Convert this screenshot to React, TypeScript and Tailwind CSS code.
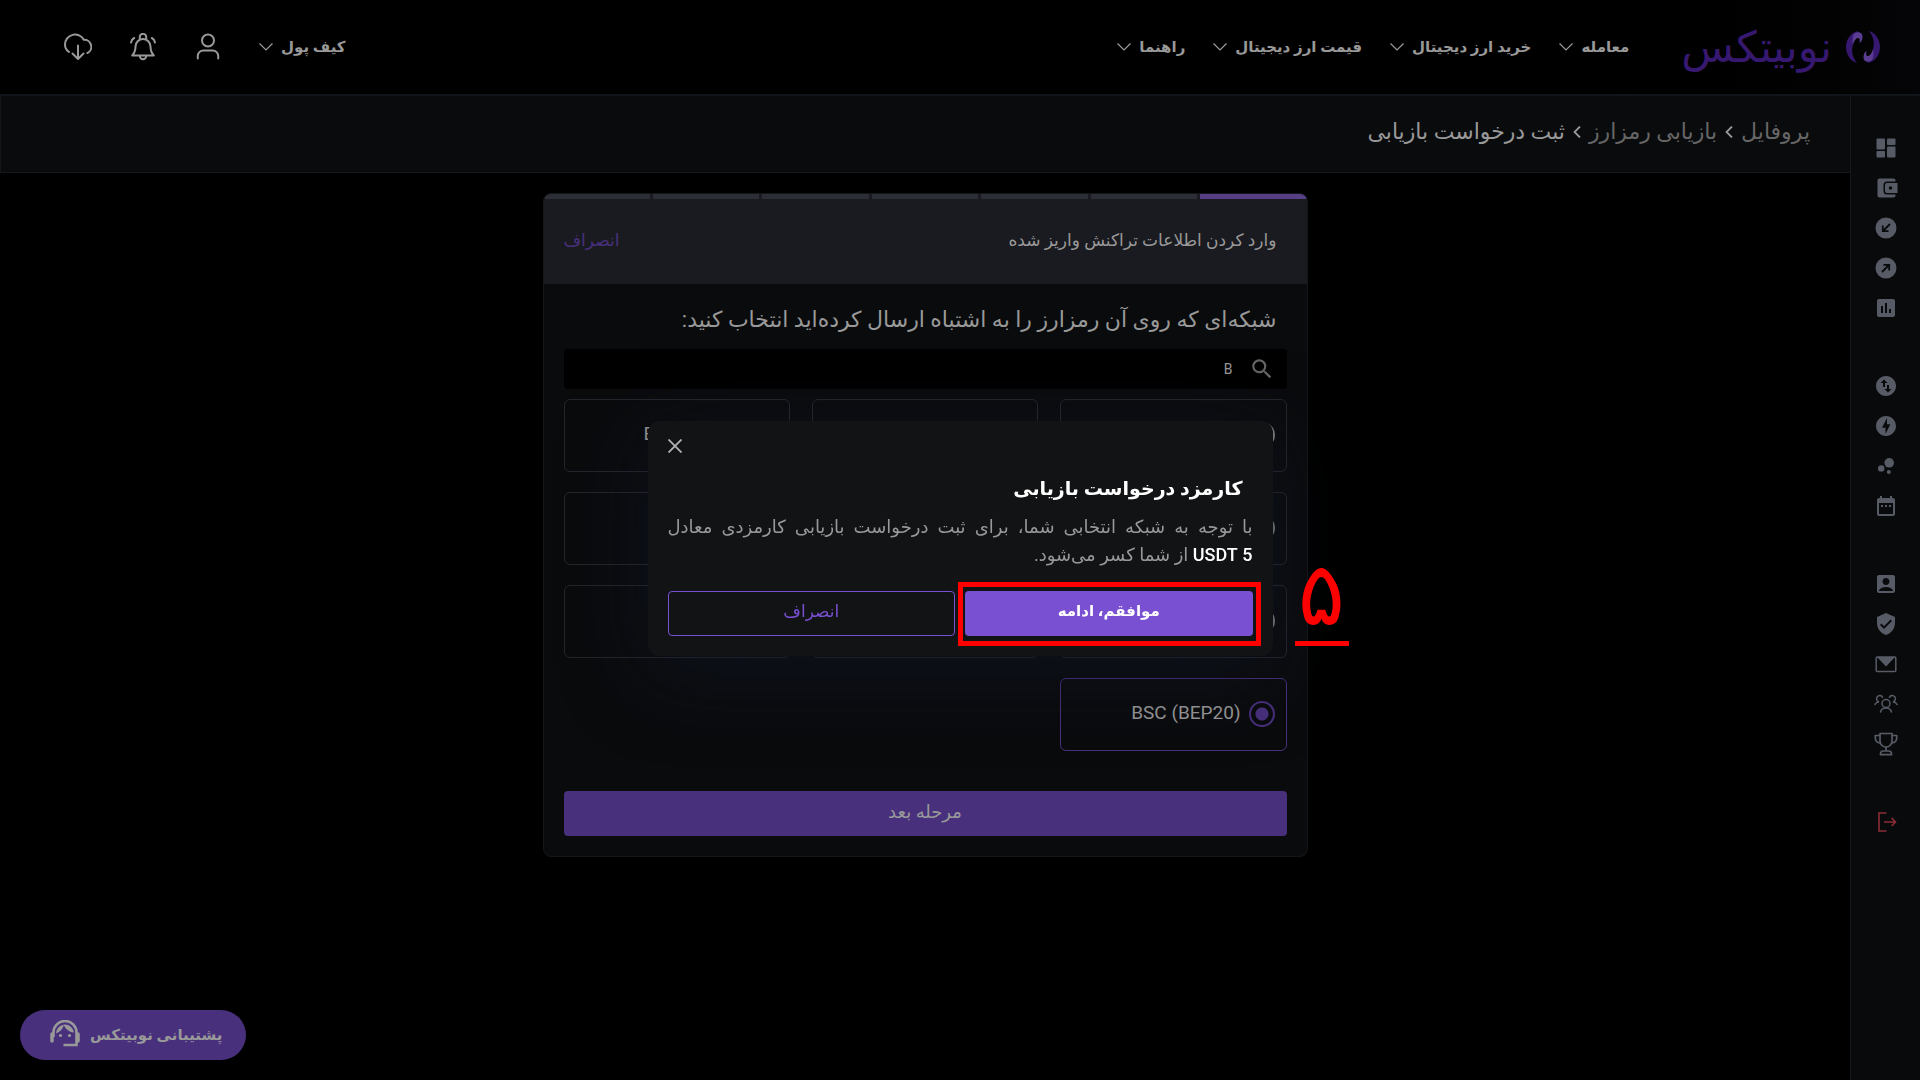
import { FC, ReactNode } from "react";
import {
  MdAccountBox,
  MdAssessment,
  MdBubbleChart,
  MdDateRange,
  MdOfflineBolt,
  MdSearch,
  MdSwapVerticalCircle,
  MdVerifiedUser,
} from "react-icons/md";

const DashboardIcon = () => (
  <svg width="24" height="24" viewBox="0 0 24 24" fill="currentColor">
    <rect x="2.500" y="2.500" width="8.500" height="11" rx="1" />
    <rect x="2.500" y="15" width="8.500" height="6.500" rx="1" />
    <rect x="13" y="2.500" width="8.500" height="6.500" rx="1" />
    <rect x="13" y="10.500" width="8.500" height="11" rx="1" />
  </svg>
);

const WalletIcon = () => (
  <svg width="24" height="24" viewBox="0 0 24 24" fill="currentColor">
    <path d="M5.500 2.500h14a2 2 0 0 1 2 2v1h-8.500a3.500 3.500 0 0 0-3.500 3.500v6a3.500 3.500 0 0 0 3.500 3.500h8.500v1a2 2 0 0 1-2 2h-14a2 2 0 0 1-2-2v-15a2 2 0 0 1 2-2z" />
    <path
      fillRule="evenodd"
      d="M13 7h10.500v10h-10.500a2 2 0 0 1-2-2v-6a2 2 0 0 1 2-2zm3.500 3.200a1.800 1.800 0 1 0 0 3.600 1.800 1.800 0 0 0 0-3.600z"
    />
  </svg>
);

const DepositIcon = () => (
  <svg width="24" height="24" viewBox="0 0 24 24">
    <circle cx="12" cy="12" r="10.500" fill="currentColor" />
    <path d="M16 8l-7 7M8.800 9.500v5.700h5.700" fill="none" stroke="#090a0c" strokeWidth="1.800" />
  </svg>
);

const WithdrawIcon = () => (
  <svg width="24" height="24" viewBox="0 0 24 24">
    <circle cx="12" cy="12" r="10.500" fill="currentColor" />
    <path d="M8 16l7-7M9.500 8.800h5.700v5.700" fill="none" stroke="#090a0c" strokeWidth="1.800" />
  </svg>
);

const MailIcon = () => (
  <svg width="24" height="24" viewBox="0 0 24 24">
    <rect x="2.200" y="5" width="19.600" height="14.500" rx="1" fill="none" stroke="currentColor" strokeWidth="1.500" />
    <path d="M3 5h18l-9 9.500z" fill="currentColor" />
  </svg>
);

const ReferralIcon = () => (
  <svg width="24" height="24" viewBox="0 0 24 24" fill="none" stroke="currentColor" strokeWidth="1.500" strokeLinecap="round">
    <circle cx="12" cy="11.500" r="4" />
    <path d="M6.500 20c.7-2.800 2.700-4 5.500-4s4.800 1.200 5.500 4" />
    <path d="M8.600 5.300a3.200 3.200 0 1 0-3.600 4.600C2.900 10 1.500 11 1 12.600M15.400 5.300a3.200 3.200 0 1 1 3.600 4.600c2.100.1 3.500 1.100 4 2.700" />
  </svg>
);

const TrophyIcon = () => (
  <svg width="24" height="24" viewBox="0 0 24 24" fill="none" stroke="currentColor" strokeWidth="1.700" strokeLinejoin="round">
    <path d="M6 1.500h12v7.500a6 6 0 0 1-12 0z" />
    <path d="M6 3.500H1.300v2.700c0 2.400 1.800 4.300 5 4.800M18 3.500h4.700v2.700c0 2.400-1.800 4.300-5 4.800" />
    <path d="M12 15v4M6.500 22.700v-1a2.700 2.700 0 0 1 2.700-2.700h5.600a2.700 2.700 0 0 1 2.700 2.700v1z" />
  </svg>
);

const LogoutIcon = () => (
  <svg width="24" height="24" viewBox="0 0 24 24" fill="none" stroke="currentColor" strokeWidth="1.600">
    <path d="M12.500 3h-7.500v18h7.500" />
    <path d="M10 12h11M17.500 8l4 4-4 4" />
  </svg>
);

const SupportIcon = () => (
  <svg width="30" height="30" viewBox="0 0 30 30" fill="none" stroke="currentColor">
    <path d="M3.500 17v-4.500a11.500 11.500 0 0 1 23 0v12.500h-13" strokeWidth="2.600" />
    <path d="M2 14v7M28 14v7" strokeWidth="3.500" strokeLinecap="round" />
    <path d="M6 13.500c4-1.500 7-4.500 7.800-8.500 1.500 4 5.200 7 10.200 7.500-1-4.500-4.500-8-9-8s-8.500 3.500-9 9z" fill="currentColor" stroke="none" />
    <circle cx="10.500" cy="15.500" r="1.600" fill="currentColor" stroke="none" />
    <circle cx="19.500" cy="15.500" r="1.600" fill="currentColor" stroke="none" />
  </svg>
);

const UserIcon = () => (
  <svg width="28" height="28" viewBox="0 0 28 28" fill="none" stroke="currentColor" strokeWidth="2" strokeLinecap="round">
    <circle cx="14" cy="7.500" r="6" />
    <path d="M3.800 25.500v-2.500a5.500 5.500 0 0 1 5.500-5.500h9.400a5.500 5.500 0 0 1 5.500 5.500v2.500" />
  </svg>
);

const BellIcon = () => (
  <svg width="28" height="28" viewBox="0 0 28 28" fill="none" stroke="currentColor" strokeWidth="2" strokeLinecap="round" strokeLinejoin="round">
    <path d="M10.800 6V4a3.200 3.200 0 0 1 6.400 0v2" />
    <path d="M14 6a7.500 7.500 0 0 0-7.500 7.500c0 4.500-1 6.500-3.300 9h21.600c-2.300-2.500-3.300-4.500-3.300-9A7.500 7.500 0 0 0 14 6z" />
    <path d="M10.800 23a3.200 3.200 0 0 0 6.400 0M2 9.500c.3-2 1.300-3.500 3.200-4.500M26 9.500c-.3-2-1.300-3.500-3.200-4.500" />
  </svg>
);

const CloudIcon = () => (
  <svg width="28" height="28" viewBox="0 0 28 28" fill="none" stroke="currentColor" strokeWidth="2" strokeLinecap="round" strokeLinejoin="round">
    <path d="M5 19C2 17 1 14.500 1 11.500a10 10 0 0 1 18.800-4.700A7 7 0 0 1 23.500 20" />
    <path d="M14 12.500v13M8.500 20.500l5.500 5.500 5.500-5.500" />
  </svg>
);

const ChevronIcon = () => (
  <svg width="14" height="8" viewBox="0 0 14 8" fill="none" stroke="currentColor" strokeWidth="1.200">
    <path d="M.5.5l6.500 6.500 6.500-6.500" />
  </svg>
);

const LogoMark = () => (
  <svg width="34" height="32" viewBox="0 0 34 32">
    <defs>
      <g id="crescent">
        <path d="M12 0C4 2 0 9 0 16s4 14 11 16C7 27 5.500 22 6.500 16 7 11 9 7 12 5z" fill="#371870" />
        <path d="M8 3c4-3 8-2 8.500 2 .2 3-1 6-3 7 .5-3 .5-5-1.500-5-2 0-4 3-5 7C6 9 6.500 5.500 8 3z" fill="#5a3c92" />
      </g>
    </defs>
    <use href="#crescent" />
    <use href="#crescent" transform="rotate(180 17 16)" />
  </svg>
);

const menu = ["معامله", "خرید ارز دیجیتال", "قیمت ارز دیجیتال", "راهنما"];

const sidebar: { label: string; icon: ReactNode }[][] = [
  [
    { label: "داشبورد", icon: <DashboardIcon /> },
    { label: "کیف پول", icon: <WalletIcon /> },
    { label: "واریز", icon: <DepositIcon /> },
    { label: "برداشت", icon: <WithdrawIcon /> },
    { label: "گزارش", icon: <MdAssessment size={24} /> },
  ],
  [
    { label: "تبدیل", icon: <MdSwapVerticalCircle size={24} /> },
    { label: "معامله سریع", icon: <MdOfflineBolt size={24} /> },
    { label: "استخر", icon: <MdBubbleChart size={24} /> },
    { label: "تقویم", icon: <MdDateRange size={24} /> },
  ],
  [
    { label: "پروفایل", icon: <MdAccountBox size={24} /> },
    { label: "امنیت", icon: <MdVerifiedUser size={24} /> },
    { label: "پیام‌ها", icon: <MailIcon /> },
    { label: "معرفی دوستان", icon: <ReferralIcon /> },
    { label: "جوایز", icon: <TrophyIcon /> },
  ],
];

const networks: { id: string; name?: string }[] = [
  { id: "BTC" },
  { id: "BCH" },
  { id: "BNB", name: "BNB (BEP2)" },
  { id: "BSV" },
  { id: "BTG" },
  { id: "BTT" },
  { id: "ARB" },
  { id: "BASE" },
  { id: "BLAST" },
  { id: "BSC", name: "BSC (BEP20)" },
];

interface NavItemProps {
  label: string;
}

const NavItem: FC<NavItemProps> = ({ label }) => (
  <button type="button" className="flex items-center gap-2 text-[15px] leading-6 font-bold whitespace-nowrap">
    {label}
    <ChevronIcon />
  </button>
);

interface NetworkOptionProps {
  id: string;
  name?: string;
  selected: boolean;
}

const NetworkOption: FC<NetworkOptionProps> = ({ id, name, selected }) => (
  <label
    className={`flex items-start gap-2 h-[73px] rounded-md border px-[11px] pt-[22px] text-[19px] leading-6 ${
      selected ? "border-[#48307d]" : "border-[#24262d]"
    }`}
  >
    <input
      type="radio"
      name="network"
      value={id}
      aria-label={name ?? id}
      defaultChecked={selected}
      className="appearance-none shrink-0 w-[26px] h-[26px] rounded-full border-2 border-[#808080] checked:border-[#48307d] checked:bg-[radial-gradient(circle,#48307d_6px,transparent_7px)]"
    />
    {name && <span dir="ltr">{name}</span>}
  </label>
);

const Header = () => (
  <header className="flex items-center h-24 border-b-2 border-[#11151a] bg-gradient-to-l from-[#050507] to-black to-20% pr-10 pl-16">
    <a href="#" className="flex items-center gap-[14px]">
      <LogoMark />
      <span className="text-[43px] leading-10 text-[#371870]">نوبیتکس</span>
    </a>
    <nav className="flex items-center gap-7 mr-13">
      {menu.map((label) => (
        <NavItem key={label} label={label} />
      ))}
    </nav>
    <div className="flex items-center gap-[37px] mr-auto">
      <NavItem label="کیف پول" />
      <button type="button" aria-label="حساب کاربری">
        <UserIcon />
      </button>
      <button type="button" aria-label="اعلان‌ها">
        <BellIcon />
      </button>
      <button type="button" aria-label="دانلود">
        <CloudIcon />
      </button>
    </div>
  </header>
);

const Sidebar = () => (
  <aside className="flex flex-col items-center gap-[54px] w-[70px] shrink-0 border-l border-[#14191e] bg-[#090a0c] pt-10 text-[#575b65]">
    {sidebar.map((group, i) => (
      <nav key={i} className="flex flex-col gap-4">
        {group.map(({ label, icon }) => (
          <a key={label} href="#" aria-label={label}>
            {icon}
          </a>
        ))}
      </nav>
    ))}
    <a href="#" aria-label="خروج" className="text-[#8c2c36]">
      <LogoutIcon />
    </a>
  </aside>
);

const BreadcrumbArrow = () => (
  <svg width="8" height="12" viewBox="0 0 8 12" fill="none" stroke="currentColor" strokeWidth="1.800">
    <path d="M7 .5l-5.500 5.500 5.500 5.500" />
  </svg>
);

const Breadcrumb = () => (
  <nav className="flex items-center gap-2 h-[77px] border-b border-l border-[#15161a] bg-[#0a0b0d] pr-10 pb-1 text-[22px] leading-8">
    <a href="#" className="text-[#666666]">
      پروفایل
    </a>
    <BreadcrumbArrow />
    <a href="#" className="text-[#666666]">
      بازیابی رمزارز
    </a>
    <BreadcrumbArrow />
    <span>ثبت درخواست بازیابی</span>
  </nav>
);

const RecoveryForm = () => (
  <section className="w-[765px] mx-auto mt-5 rounded-lg border border-[#15161a] bg-[#0a0b0d] overflow-hidden">
    <div className="grid grid-cols-7 gap-[3px] bg-[#1a1b20]">
      {[0, 1, 2, 3, 4, 5, 6].map((step) => (
        <div key={step} className={`h-[5px] ${step === 0 ? "bg-[#563f85]" : "bg-[#2c2e35]"}`} />
      ))}
    </div>
    <div className="flex items-center justify-between h-[85px] bg-[#1a1b20] pr-[30px] pl-5 pb-1 text-[17px] leading-6">
      <h2>وارد کردن اطلاعات تراکنش واریز شده</h2>
      <a href="#" className="text-[#48307d]">
        انصراف
      </a>
    </div>
    <form className="px-5 pb-5">
      <h1 className="h-[65px] pt-5 pr-[10px] text-[22px] leading-8">
        شبکه‌ای که روی آن رمزارز را به اشتباه ارسال کرده‌اید انتخاب کنید:
      </h1>
      <div className="flex items-center gap-4 h-10 rounded bg-black px-3">
        <MdSearch size={26} className="text-[#666666]" />
        <input
          type="text"
          aria-label="جستجوی شبکه"
          defaultValue="B"
          className="flex-1 bg-transparent text-sm outline-none"
        />
      </div>
      <div className="grid grid-cols-3 gap-x-[22px] gap-y-5 mt-[10px] mb-10">
        {networks.map(({ id, name }) => (
          <NetworkOption key={id} id={id} name={name} selected={id === "BSC"} />
        ))}
      </div>
      <button type="button" className="w-full h-[45px] rounded bg-[#48307d] pb-1 text-lg leading-6">
        مرحله بعد
      </button>
    </form>
  </section>
);

const FeeDialog = () => (
  <div className="fixed inset-0 flex items-center justify-center pb-1">
    <div
      role="dialog"
      aria-label="کارمزد درخواست بازیابی"
      className="relative w-[625px] rounded-xl bg-[#121315] p-5 pt-[18px] shadow-[0_16px_80px_rgba(20,26,46,0.5)]"
    >
      <button type="button" aria-label="بستن" className="block mr-auto text-[#b3b3b3]">
        <svg width="14" height="14" viewBox="0 0 14 14" stroke="currentColor" strokeWidth="1.800">
          <path d="M.5.5l13 13M13.500.5l-13 13" />
        </svg>
      </button>
      <h2 className="mt-[18px] pr-[10px] text-[19px] leading-9 font-bold text-white">کارمزد درخواست بازیابی</h2>
      <p className="mt-[6px] text-lg leading-7 text-justify text-[#999999]">
        با توجه به شبکه انتخابی شما، برای ثبت درخواست بازیابی کارمزدی معادل{" "}
        <span className="font-medium text-white whitespace-nowrap">5 USDT</span> از شما کسر می‌شود.
      </p>
      <div className="grid grid-cols-2 gap-[10px] mt-[22px]">
        <button type="button" className="h-[45px] rounded bg-[#7950d2] pb-1 text-[15px] leading-6 font-bold text-white">
          موافقم، ادامه
        </button>
        <button type="button" className="h-[45px] rounded border border-[#7950d2] pb-1 text-[17px] leading-6 text-[#7950d2]">
          انصراف
        </button>
      </div>
      <div className="absolute right-3 bottom-[10px] w-[303px] h-16 border-[5px] border-[#ff0000]" />
      <div className="absolute -right-[76px] bottom-[10px] w-[54px] border-b-[5px] border-[#ff0000] text-center text-[88px] leading-[92px] text-[#ff0000]">
        ۵
      </div>
    </div>
  </div>
);

const App = () => (
  <div
    dir="rtl"
    lang="fa"
    className="flex flex-col min-h-screen bg-black text-[#999999] font-[Roboto,'DejaVu_Sans',sans-serif]"
  >
    <Header />
    <div className="flex flex-1">
      <Sidebar />
      <main className="flex-1">
        <Breadcrumb />
        <RecoveryForm />
      </main>
    </div>
    <FeeDialog />
    <button
      type="button"
      className="fixed left-5 bottom-5 flex items-center gap-[10px] h-[50px] rounded-full bg-[#48307d] pr-6 pl-[30px] text-[15px] leading-6 font-bold"
    >
      پشتیبانی نوبیتکس
      <SupportIcon />
    </button>
  </div>
);

export default App;
